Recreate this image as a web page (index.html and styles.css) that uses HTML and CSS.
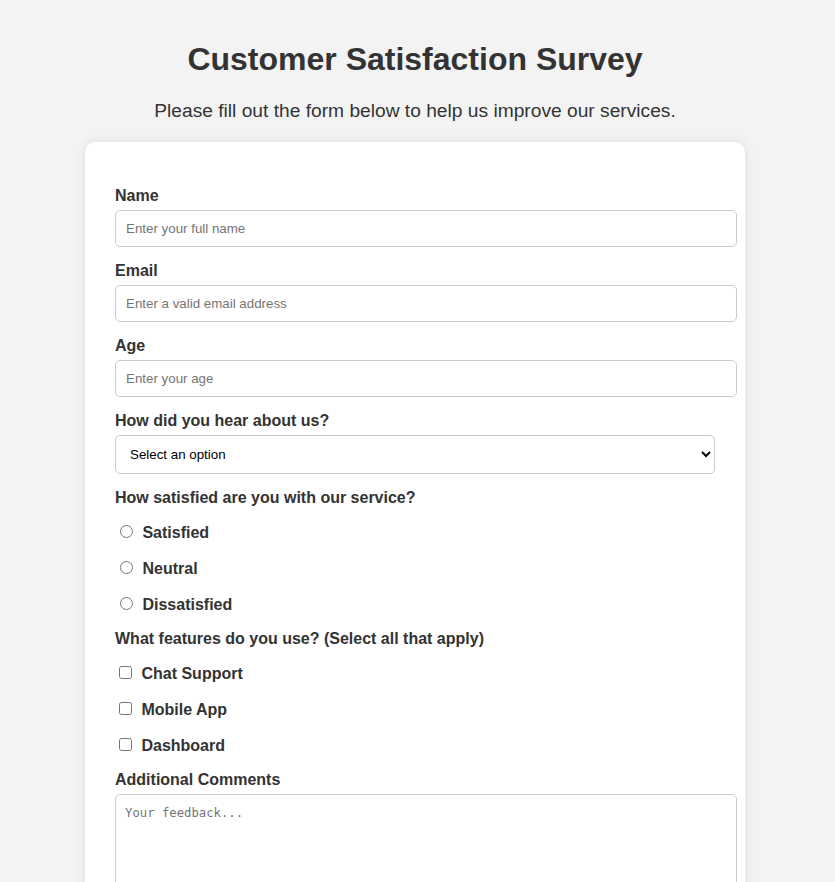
FILE: index.html
```html
<!DOCTYPE html>
<html lang="en">
<head>
<meta charset="utf-8">
<title>Customer Satisfaction Survey</title>
<link rel="stylesheet" href="styles.css">
</head>
<body>
<h1 class="title">Customer Satisfaction Survey</h1>
<p class="intro">Please fill out the form below to help us improve our services.</p>
<form class="survey">
  <label class="field-label" for="name">Name</label>
  <input class="text-input" type="text" id="name" placeholder="Enter your full name">

  <label class="field-label" for="email">Email</label>
  <input class="text-input" type="email" id="email" placeholder="Enter a valid email address">

  <label class="field-label" for="age">Age</label>
  <input class="text-input" type="number" id="age" placeholder="Enter your age">

  <label class="field-label" for="source">How did you hear about us?</label>
  <select class="select-input" id="source">
    <option>Select an option</option>
    <option>Friend</option>
    <option>Social Media</option>
    <option>Advertisement</option>
  </select>

  <label class="field-label">How satisfied are you with our service?</label>
  <label class="choice"><input class="radio-box" type="radio" name="sat"> Satisfied</label>
  <label class="choice"><input class="radio-box" type="radio" name="sat"> Neutral</label>
  <label class="choice"><input class="radio-box" type="radio" name="sat"> Dissatisfied</label>

  <label class="field-label">What features do you use? (Select all that apply)</label>
  <label class="choice"><input class="check-box" type="checkbox"> Chat Support</label>
  <label class="choice"><input class="check-box" type="checkbox"> Mobile App</label>
  <label class="choice"><input class="check-box" type="checkbox"> Dashboard</label>

  <label class="field-label" for="comments">Additional Comments</label>
  <textarea class="text-area" id="comments" rows="6" placeholder="Your feedback..."></textarea>

  <button class="submit" type="submit">Submit</button>
</form>
</body>
</html>
```
FILE: styles.css
```css
html, body {
  margin: 0;
}
body {
  font-family: "Liberation Sans", Arial, sans-serif;
  background: #f3f3f3;
  color: #333;
  padding: 20px 25px 20px 20px;
}
.title {
  text-align: center;
  font-size: 32px;
  margin: 21.44px 0;
}
.intro {
  text-align: center;
  font-size: 19.2px;
  margin: 19.2px 0 20.4px;
}
.survey {
  background: #fff;
  max-width: 600px;
  margin: 0 auto;
  padding: 30px;
  border-radius: 10px;
  box-shadow: 0 0 10px rgba(0, 0, 0, 0.1);
}
.field-label {
  display: block;
  font-weight: bold;
  font-size: 16px;
  margin: 15px 0 5px;
}
.text-input, .text-area {
  width: 100%;
  padding: 10px;
  border: 1px solid #ccc;
  border-radius: 5px;
  font-size: 13.333px;
  margin: 0;
}
.text-input {
  font-family: "Liberation Sans", Arial, sans-serif;
}
.text-area {
  font-family: "DejaVu Sans Mono", "Liberation Mono", monospace;
  font-size: 12.25px;
  padding: 11px 11px 10px 9px;
  display: block;
  resize: vertical;
}
.text-input::placeholder, .text-area::placeholder {
  color: #757575;
}
.select-input {
  width: 100%;
  padding: 10px;
  border: 1px solid #ccc;
  border-radius: 5px;
  font-family: "Liberation Sans", Arial, sans-serif;
  font-size: 13.333px;
  color: #000;
  background: #fff;
  margin: 0;
}
.choice {
  display: block;
  font-weight: bold;
  font-size: 16px;
  margin: 15px 0 5px;
  padding-bottom: 1px;
}
.radio-box {
  margin: 3px 5px 0 5px;
}
.check-box {
  margin: 3px 5px 0 4px;
}
.submit {
  margin-top: 20px;
  padding: 10px 20px;
  background: #28a745;
  color: #fff;
  border: none;
  border-radius: 5px;
  font-size: 16px;
}
```
